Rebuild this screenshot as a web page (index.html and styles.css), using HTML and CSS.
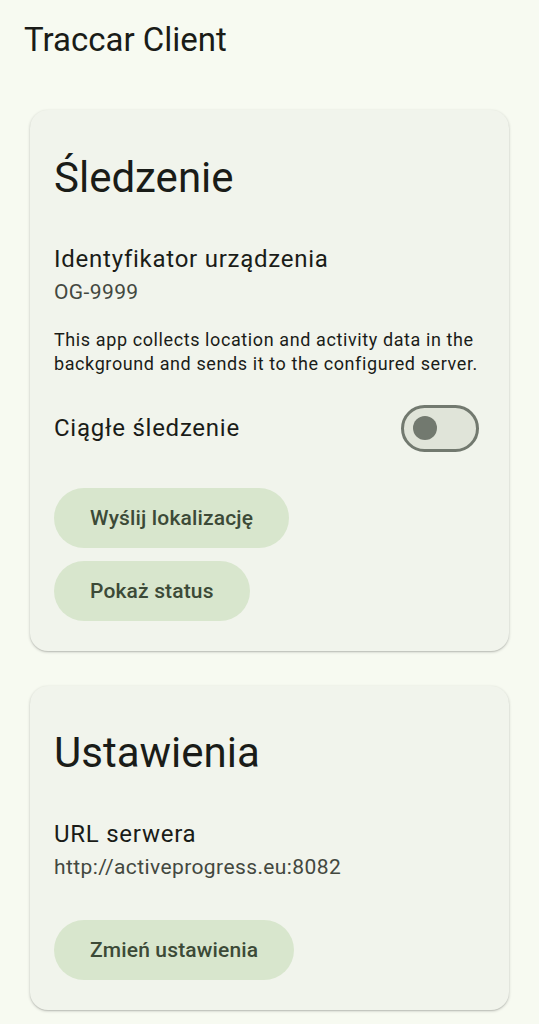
FILE: index.html
```html
<!DOCTYPE html>
<html lang="pl">
<head>
<meta charset="utf-8">
<title>Traccar Client</title>
<link rel="stylesheet" href="styles.css">
</head>
<body>
<header class="appbar">Traccar Client</header>
<main class="content">
  <section class="card">
    <h2 class="card-title">Śledzenie</h2>
    <div class="label label-first">Identyfikator urządzenia</div>
    <div class="value">OG-9999</div>
    <p class="note">This app collects location and activity data in the background and sends it to the configured server.</p>
    <div class="switch-row">
      <span class="switch-label">Ciągłe śledzenie</span>
      <span class="switch"><span class="thumb"></span></span>
    </div>
    <div class="actions actions-tracking">
      <button class="btn">Wyślij lokalizację</button>
      <button class="btn">Pokaż status</button>
    </div>
  </section>
  <section class="card card-settings">
    <h2 class="card-title">Ustawienia</h2>
    <div class="label label-first">URL serwera</div>
    <div class="value">http://activeprogress.eu:8082</div>
    <div class="actions actions-settings">
      <button class="btn">Zmień ustawienia</button>
    </div>
  </section>
</main>
</body>
</html>
```
FILE: styles.css
```css
* { box-sizing: border-box; }
html, body {
  margin: 0;
  padding: 0;
  background: #f7faf1;
}
body {
  font-family: Roboto, "Noto Sans", "Liberation Sans", sans-serif;
  color: #1a1c18;
  width: 539px;
  height: 1024px;
  overflow: hidden;
}
.appbar {
  padding: 20px 24px 0;
  font-size: 33px;
  line-height: 40px;
  font-weight: 400;
  color: #1a1c18;
}
.content {
  display: flex;
  flex-direction: column;
  gap: 35px;
  padding: 50px 30px 0;
}
.card {
  background: #f1f4ec;
  border-radius: 18px;
  padding: 41px 24px 30px;
  box-shadow: 0 1px 3px rgba(0, 0, 0, 0.22), 0 1px 1px rgba(0, 0, 0, 0.08);
}
.card-settings { padding-top: 40px; }
.card-title {
  margin: 0;
  font-size: 42px;
  line-height: 54px;
  font-weight: 400;
  color: #1a1c18;
}
.label {
  font-size: 24px;
  line-height: 36px;
  letter-spacing: 0.75px;
  color: #1a1c18;
}
.label-first { margin-top: 36px; }
.value {
  font-size: 21px;
  line-height: 30px;
  letter-spacing: 0.4px;
  color: #43483f;
}
.note {
  margin: 21px 0 0;
  font-size: 18px;
  line-height: 24px;
  letter-spacing: 0.6px;
  color: #1a1c18;
}
.switch-row {
  margin-top: 28px;
  display: flex;
  align-items: center;
  justify-content: space-between;
  height: 48px;
  padding-right: 6px;
}
.switch-label {
  font-size: 24px;
  line-height: 36px;
  letter-spacing: 0.75px;
}
.switch {
  width: 78px;
  height: 47px;
  border: 3px solid #72796f;
  border-radius: 24px;
  background: #e0e4d9;
  display: flex;
  align-items: center;
  padding-left: 9px;
}
.thumb {
  width: 24px;
  height: 24px;
  border-radius: 50%;
  background: #72796f;
}
.actions {
  display: flex;
  flex-direction: column;
  align-items: flex-start;
  gap: 13px;
}
.actions-tracking { margin-top: 36px; }
.actions-settings { margin-top: 38px; }
.btn {
  height: 60px;
  padding: 0 36px;
  border: none;
  border-radius: 30px;
  background: #d8e6cd;
  color: #3c4a37;
  font-family: Roboto, "Noto Sans", "Liberation Sans", sans-serif;
  font-size: 21px;
  font-weight: 500;
  letter-spacing: 0.15px;
}
```
